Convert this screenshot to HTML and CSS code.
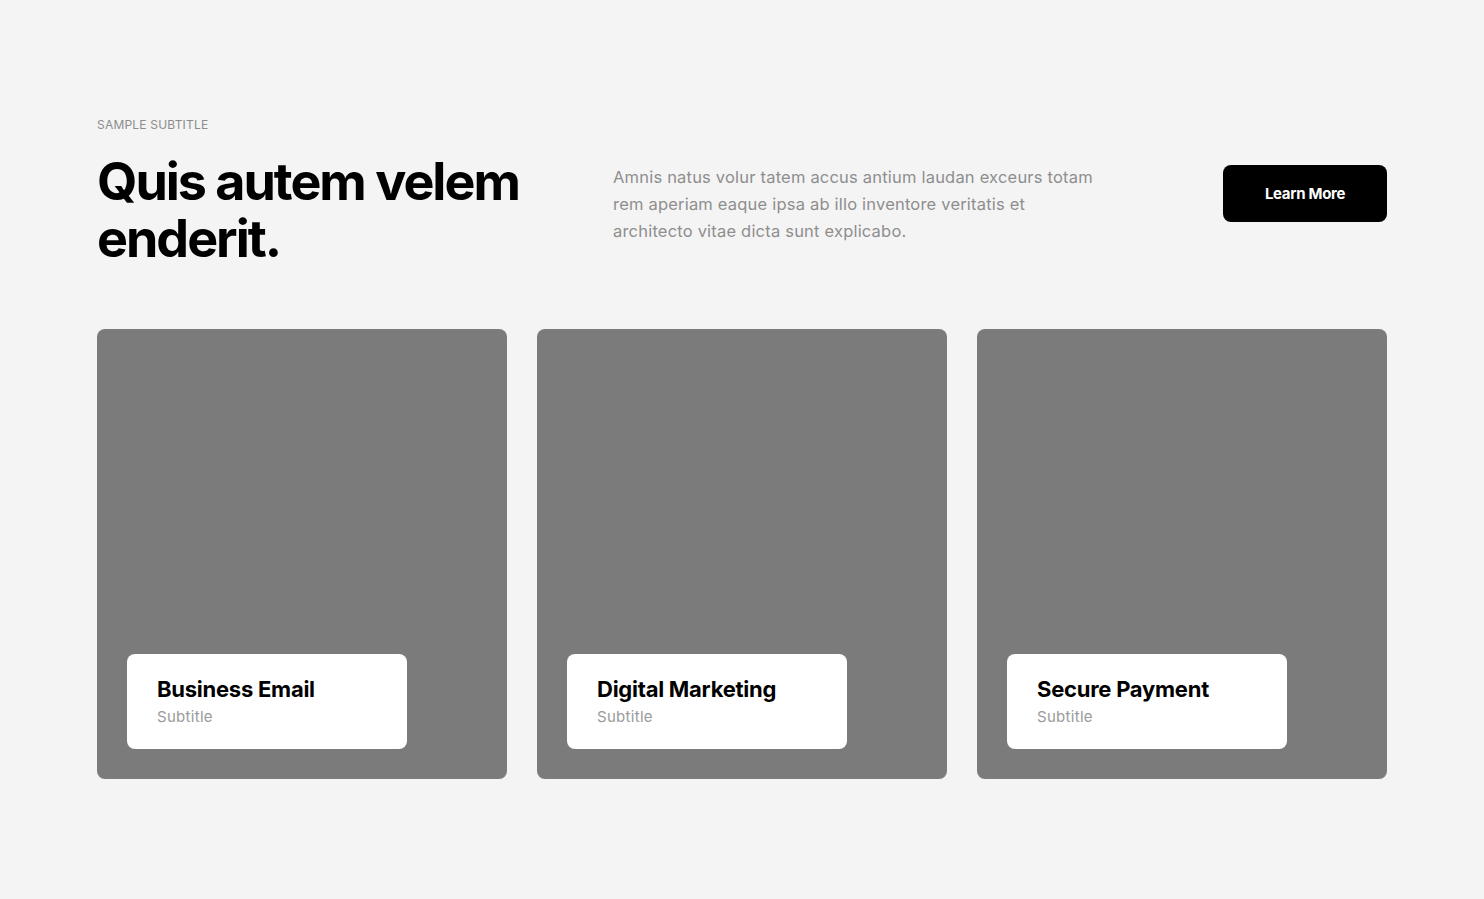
FILE: index.html
```html
<!DOCTYPE html>
<html lang="en">
<head>
<meta charset="utf-8">
<title>Services</title>
<link rel="stylesheet" href="styles.css">
</head>
<body>
<section class="section">
  <p class="eyebrow">SAMPLE SUBTITLE</p>
  <div class="intro">
    <h1 class="title">Quis autem velem enderit.</h1>
    <p class="lead">Amnis natus volur tatem accus antium laudan exceurs totam rem aperiam eaque ipsa ab illo inventore veritatis et architecto vitae dicta sunt explicabo.</p>
    <a class="btn" href="#">Learn More</a>
  </div>
  <div class="cards">
    <article class="card">
      <div class="card-label">
        <h2 class="card-title">Business Email</h2>
        <p class="card-sub">Subtitle</p>
      </div>
    </article>
    <article class="card">
      <div class="card-label">
        <h2 class="card-title">Digital Marketing</h2>
        <p class="card-sub">Subtitle</p>
      </div>
    </article>
    <article class="card">
      <div class="card-label">
        <h2 class="card-title">Secure Payment</h2>
        <p class="card-sub">Subtitle</p>
      </div>
    </article>
  </div>
</section>
</body>
</html>
```

FILE: styles.css
```css
* { box-sizing: border-box; }
html, body { margin: 0; padding: 0; }
body {
  background: #f4f4f4;
  font-family: Inter, "Noto Sans", "Liberation Sans", sans-serif;
  color: #000;
}
.section {
  width: 1290px;
  margin: 0 auto;
  padding-top: 117px;
}
.eyebrow {
  margin: 0;
  font-size: 12px;
  line-height: 16px;
  color: #8c8c8c;
  letter-spacing: 0.2px;
}
.intro {
  display: flex;
  align-items: flex-start;
  margin-top: 20px;
}
.title {
  width: 516px;
  margin: 0;
  font-size: 52px;
  line-height: 57px;
  font-weight: 700;
  letter-spacing: -2px;
}
.lead {
  width: 494px;
  margin: 11px 0 0 0;
  font-size: 16.5px;
  line-height: 27px;
  color: #8e8e8e;
  letter-spacing: 0.2px;
}
.btn {
  margin-left: auto;
  margin-top: 12px;
  width: 164px;
  height: 57px;
  display: flex;
  align-items: center;
  justify-content: center;
  background: #000;
  color: #fff;
  border-radius: 8px;
  font-size: 15px;
  font-weight: 700;
  text-decoration: none;
  letter-spacing: -0.3px;
}
.cards {
  display: grid;
  grid-template-columns: repeat(3, 1fr);
  gap: 30px;
  margin-top: 62px;
}
.card {
  height: 450px;
  background: #7b7b7c;
  border-radius: 8px;
  display: flex;
  align-items: flex-end;
  padding: 30px;
}
.card-label {
  width: 280px;
  background: #fff;
  border-radius: 8px;
  padding: 21px 30px 22px;
}
.card-title {
  margin: 0;
  font-size: 22px;
  line-height: 29px;
  font-weight: 700;
  letter-spacing: -0.25px;
}
.card-sub {
  margin: 3px 0 0 0;
  font-size: 15px;
  line-height: 20px;
  color: #9a9a9a;
  letter-spacing: 0.3px;
}
```
